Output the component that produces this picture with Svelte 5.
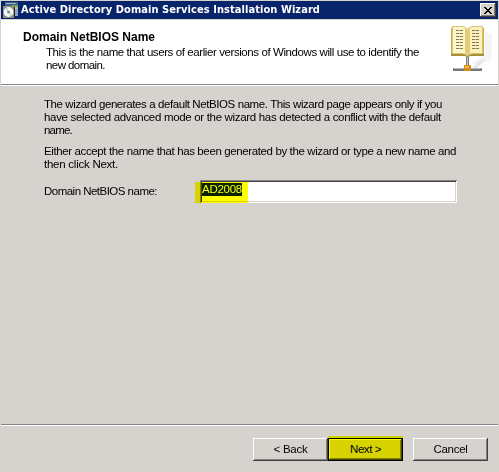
<script>
  const intro = [
    ['The wizard generates a default NetBIOS name. This wizard page appears only if you', 398],
    ['have selected advanced mode or the wizard has detected a conflict with the default', 397],
    ['name.', 28]
  ];
  const choice = [
    ['Either accept the name that has been generated by the wizard or type a new name and', 412],
    ['then click Next.', 74]
  ];
  const description = [
    ['This is the name that users of earlier versions of Windows will use to identify the', 373],
    ['new domain.', 59]
  ];

  function fit(node, width) {
    const natural = node.getBoundingClientRect().width;
    const n = node.textContent.length;
    node.style.letterSpacing = `${(width - natural) / n}px`;
  }
</script>

<main class="window">
  <header class="titlebar">
    <svg class="app-icon" width="16" height="16" viewBox="0 0 16 16" shape-rendering="crispEdges">
      <path d="M2 0h13v4H2z" fill="#4a6284" />
      <path d="M3 1h10v1H3z" fill="#8fb0d0" />
      <path d="M11 3h4v11h-4z" fill="#8da5c8" />
      <path d="M9 3h5v2H9z" fill="#5aa857" />
      <path d="M10 5h4v2h-4z" fill="#f0cf42" />
      <path d="M0 4h12v12H0z" fill="#8c8c86" />
      <path d="M11 5h1v11h-1z" fill="#222" />
      <circle cx="5.500" cy="10" r="4.900" fill="#f3f5f2" shape-rendering="auto" />
      <path d="M5.500 10 2 6.500 4.500 5zM5.500 10l4 3-2.500 1.700z" fill="#b9dcc0" shape-rendering="auto" />
      <circle cx="5.500" cy="10" r="1.300" fill="#777" shape-rendering="auto" />
    </svg>
    <h1><span use:fit={299}>Active Directory Domain Services Installation Wizard</span></h1>
    <button class="close" aria-label="Close">
      <svg width="8" height="7" viewBox="0 0 8 7" shape-rendering="crispEdges">
        <path d="M0 0h2v1h1v1h2v-1h1v-1h2v1h-1v1h-1v1h-1v1h1v1h1v1h1v1h-2v-1h-1v-1h-2v1h-1v1h-2v-1h1v-1h1v-1h1v-1h-1v-1h-1v-1h-1z" fill="#000" />
      </svg>
    </button>
  </header>

  <section class="banner">
    <div class="heading">
      <h2><span use:fit={132}>Domain NetBIOS Name</span></h2>
      <p class="description">
        {#each description as [text, width]}<span class="line" use:fit={width}>{text}</span>{/each}
      </p>
    </div>
    <svg class="book" width="44" height="48" viewBox="0 0 44 48">
      <path d="M35 7l7 3-1 25-15 5-5-1 14-10z" fill="#f4f4f7" />
      <path d="M22 43l10-9 3 1-8 8z" fill="#e6e6ea" />
      <path d="M1 3l2-1v27l-2 1zM32 2l2 1v27l-2-1z" fill="#c9b04c" />
      <path d="M1 29h14l2.500 2 2.500-2h14v2H20l-2.500 1.500-2.500-1.500H1z" fill="#a98f38" />
      <path d="M2.500 1.500h9.500q4 0 5.500 3v26q-2-2-5.500-2H2.500z" fill="#fdf5cc" stroke="#d8c272" />
      <path d="M32.500 1.500H23q-4 0-5.500 3v26q2-2 5.500-2h9.500z" fill="#fcf1bd" stroke="#d8c272" />
      <path d="M15 2.500q2 .5 2.500 2.500v25q-1-1.500-2.500-2zM20 2.500q-2 .5-2.500 2.500v25q1-1.500 2.500-2z" fill="#e3cb78" />
      <path d="M6 5.500h7M6 8.500h7M6 11.500h7M6 14.500h7M6 17.500h7M6 20.500h7M6 23.500h7M22 5.500h7M22 8.500h7M22 11.500h7M22 14.500h7M22 17.500h7M22 20.500h7M22 23.500h7" stroke="#857a50" stroke-dasharray="3 .5 4 1" />
      <path d="M16 32h3v9h-3z" fill="#777c80" />
      <path d="M17 32h1v9h-1z" fill="#c3c6c8" />
      <path d="M3 43h29v3H3z" fill="#74797d" />
      <path d="M4 43h27v1H4z" fill="#b7babd" />
      <path d="M14 40h7v6h-7z" fill="#d98a1c" />
      <path d="M15 41h4v2h-4z" fill="#f7b544" />
    </svg>
  </section>

  <section class="content">
    <p>{#each intro as [text, width]}<span class="line" use:fit={width}>{text}</span>{/each}</p>
    <p>{#each choice as [text, width]}<span class="line" use:fit={width}>{text}</span>{/each}</p>
    <div class="field">
      <label for="netbios"><span use:fit={113}>Domain NetBIOS name:</span></label>
      <div class="entry">
        <div class="input" id="netbios"><span class="selected"><span use:fit={40}>AD2008</span></span></div>
        <i class="marker"></i>
      </div>
    </div>
  </section>

  <footer>
    <button class="push"><span use:fit={34}>&lt; Back</span></button>
    <button class="push default"><span use:fit={31}>Next &gt;</span><i class="marker"></i></button>
    <button class="push cancel"><span use:fit={34}>Cancel</span></button>
  </footer>
</main>

<style>
  :global(body) { background: #d6d3ce; }
  .window {
    box-sizing: border-box;
    width: 499px;
    height: 472px;
    padding: 1px 1px 0;
    display: flex;
    flex-direction: column;
    background: #d6d3ce;
    font: 11.5px/13px "Liberation Sans", Arial, sans-serif;
    color: #000;
    overflow: hidden;
  }
  h1, h2, p { margin: 0; }
  span { white-space: nowrap; }
  .titlebar {
    height: 18px;
    display: flex;
    align-items: center;
    padding: 0 2px;
    border-bottom: 1px solid #d6d3ce;
    background: #08246b;
    color: #fff;
  }
  .app-icon { flex: none; }
  h1 { flex: 1; margin-left: 2px; font: bold 11px/16px "DejaVu Sans Condensed", "DejaVu Sans", sans-serif; }
  button { font: inherit; color: inherit; border: 0; border-radius: 0; padding: 0; background: #d6d3ce; }
  .close {
    width: 16px;
    height: 14px;
    display: grid;
    place-items: center;
    box-shadow: inset -1px -1px #424142, inset 1px 1px #fff, inset -2px -2px #848284;
  }
  .banner {
    height: 65px;
    display: flex;
    justify-content: space-between;
    box-sizing: border-box;
    background: #fff;
    border-bottom: 1px solid #848284;
    box-shadow: 0 1px #fff;
  }
  .heading { padding: 10px 0 0 22px; }
  h2 { font: bold 12px/14px "Liberation Sans", Arial, sans-serif; }
  .description { padding: 2px 0 0 23px; }
  .line { display: block; width: max-content; }
  .book { margin: 5px 4px 0 0; }
  .content { flex: 1; padding: 13px 0 0 43px; }
  .content p { margin-bottom: 8px; }
  .field { display: flex; align-items: center; margin-top: 9px; }
  label { width: 156px; }
  .entry { position: relative; width: 257px; height: 23px; }
  .input {
    box-sizing: border-box;
    height: 23px;
    padding: 3px 2px;
    background: #fff;
    box-shadow: inset 1px 1px #848284, inset -1px -1px #fff, inset 2px 2px #424142, inset -2px -2px #d6d3ce;
  }
  .selected { display: block; width: 40px; height: 13px; background: #08246b; color: #fff; }
  .marker { position: absolute; background: #ff0; mix-blend-mode: multiply; }
  .entry .marker { left: -5px; top: 2px; width: 53px; height: 21px; }
  footer {
    box-sizing: border-box;
    height: 48px;
    display: flex;
    justify-content: flex-end;
    padding: 13px 10px 0 0;
    border-top: 1px solid #848284;
    box-shadow: inset 0 1px #fff;
  }
  .push {
    width: 75px;
    height: 23px;
    box-shadow: inset -1px -1px #424142, inset 1px 1px #fff, inset -2px -2px #848284;
  }
  .default {
    position: relative;
    border: 1px solid #000;
  }
  .default .marker { left: -1px; top: -3px; width: 75px; height: 25px; }
  .cancel { margin-left: 10px; }
</style>
